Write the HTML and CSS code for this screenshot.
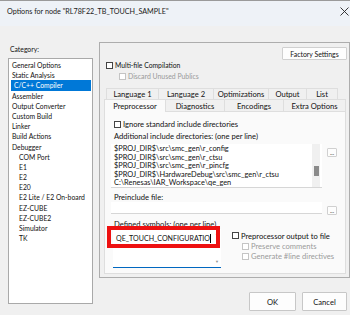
FILE: index.html
```html
<!DOCTYPE html>
<html>
<head>
<meta charset="utf-8">
<link rel="stylesheet" href="styles.css">
</head>
<body>
<div class="window">
  <div class="titlebar">
    <span class="title">Options for node "RL78F22_TB_TOUCH_SAMPLE"</span>
    <svg class="close" width="9" height="9" viewBox="0 0 9 9"><path d="M0.5 0.5 L8.5 8.5 M8.5 0.5 L0.5 8.5" stroke="#222" stroke-width="0.9" fill="none"/></svg>
  </div>
  <div class="main">
    <div class="leftcol">
      <div class="cat-label">Category:</div>
      <ul class="catlist">
        <li>General Options</li>
        <li>Static Analysis</li>
        <li class="sel">C/C++ Compiler</li>
        <li>Assembler</li>
        <li>Output Converter</li>
        <li>Custom Build</li>
        <li>Linker</li>
        <li>Build Actions</li>
        <li>Debugger</li>
        <li class="sub">COM Port</li>
        <li class="sub">E1</li>
        <li class="sub">E2</li>
        <li class="sub">E20</li>
        <li class="sub">E2 Lite / E2 On-board</li>
        <li class="sub">EZ-CUBE</li>
        <li class="sub">EZ-CUBE2</li>
        <li class="sub">Simulator</li>
        <li class="sub">TK</li>
      </ul>
    </div>
    <div class="rightcol">
      <div class="group">
        <div class="factory-row"><span class="btn factory">Factory Settings</span></div>
        <div class="chk multi"><span class="box"></span>Multi-file Compilation</div>
        <div class="chk discard disabled"><span class="box"></span>Discard Unused Publics</div>
        <div class="tabs">
          <div class="tabrow back">
            <span class="tab w53">Language 1</span>
            <span class="tab w56">Language 2</span>
            <span class="tab w56">Optimizations</span>
            <span class="tab w39">Output</span>
            <span class="tab w31">List</span>
          </div>
          <div class="tabrow front">
            <span class="tab active w62">Preprocessor</span>
            <span class="tab w59">Diagnostics</span>
            <span class="tab w59">Encodings</span>
            <span class="tab w62b">Extra Options</span>
          </div>
          <div class="panel">
            <div class="chk ignore"><span class="box"></span>Ignore standard include directories</div>
            <div class="lbl l-add">Additional include directories: (one per line)</div>
            <div class="field-row">
              <div class="textarea inc">
                <div class="lines">
                  <div>$PROJ_DIR$\src\smc_gen\r_config</div>
                  <div>$PROJ_DIR$\src\smc_gen\r_ctsu</div>
                  <div>$PROJ_DIR$\src\smc_gen\r_pincfg</div>
                  <div>$PROJ_DIR$\HardwareDebug\src\smc_gen\r_ctsu</div>
                  <div>C:\Renesas\IAR_Workspace\qe_gen</div>
                </div>
                <div class="vscroll"><div class="thumb"></div></div>
              </div>
              <span class="btn dots dots1">...</span>
            </div>
            <div class="lbl l-pre">Preinclude file:</div>
            <div class="field-row">
              <div class="input pre"></div>
              <span class="btn dots dots2">...</span>
            </div>
            <div class="lbl l-def">Defined symbols: (one per line)</div>
            <div class="def-row">
              <div class="defbox">
                <div class="deftext">QE_TOUCH_CONFIGURATIO<span class="caret"></span></div>
                <div class="arrows"><span>&#9650;</span><span>&#9660;</span></div>
                <div class="highlight"></div>
              </div>
              <div class="pp-opts">
                <div class="chk pp"><span class="box"></span>Preprocessor output to file</div>
                <div class="chk ppsub disabled"><span class="box"></span>Preserve comments</div>
                <div class="chk ppsub disabled"><span class="box"></span>Generate #line directives</div>
              </div>
            </div>
          </div>
        </div>
      </div>
      <div class="buttons">
        <span class="btn ok">OK</span>
        <span class="btn cancel">Cancel</span>
      </div>
    </div>
  </div>
</div>
</body>
</html>
```

FILE: styles.css
```css
* { box-sizing: border-box; }
html, body {
  margin: 0;
  padding: 0;
  width: 350px;
  height: 315px;
  overflow: hidden;
  background: #f0f0f0;
  font-family: Lato, "Noto Sans", sans-serif;
  font-size: 7.6px;
  color: #111;
}
.window {
  width: 350px;
  height: 315px;
  border-top: 1px solid #9a9a9a;
  background: #f0f0f0;
}
.titlebar {
  height: 25px;
  background: #eef2f7;
  display: flex;
  align-items: center;
  justify-content: space-between;
  padding: 0 1px 4px 7px;
}
.title {
  font-size: 7.2px;
  color: #1a1a1a;
}
.main {
  display: flex;
}
.leftcol {
  margin-left: 8px;
  width: 86px;
  font-size: 6.8px;
}
.cat-label {
  margin-top: 18px;
  height: 10px;
  line-height: 10px;
  padding-left: 2px;
}
.catlist {
  list-style: none;
  margin: 4px 0 0 0;
  padding: 1px 1px 0 1px;
  height: 246px;
  background: #fff;
  border: 1px solid #a9a9a9;
}
.catlist li {
  height: 10.2px;
  line-height: 10.2px;
  padding-left: 2px;
  white-space: nowrap;
}
.catlist li.sel {
  background: #0078d7;
  color: #fff;
  margin-left: 1px;
  padding-left: 3px;
}
.catlist li.sub { padding-left: 9px; }
.rightcol {
  margin-left: 6px;
  margin-top: 16px;
}
.group {
  width: 251px;
  height: 236px;
  border: 1px solid #adadad;
  padding-right: 2px;
}
.factory-row {
  display: flex;
  justify-content: flex-end;
  margin-top: 4px;
}
.btn {
  display: flex;
  align-items: center;
  justify-content: center;
  background: #fdfdfd;
  border: 1px solid #d0d0d0;
  border-radius: 1px;
}
.factory {
  width: 65px;
  height: 13px;
  font-size: 6.9px;
}
.chk {
  display: flex;
  align-items: center;
  height: 10px;
  white-space: nowrap;
}
.chk .box {
  width: 7px;
  height: 7px;
  border: 1px solid #444;
  background: #fff;
  margin-right: 2px;
  flex: none;
}
.chk.disabled { color: #9a9a9a; }
.chk.disabled .box { border-color: #c4c4c4; }
.multi { margin-left: 6px; font-size: 6.8px; }
.discard { margin-left: 19px; margin-top: 1px; font-size: 6.9px; }
.tabs {
  margin-top: 7px;
  margin-left: 4px;
  width: 242px;
}
.tabrow {
  display: flex;
}
.tabrow.back {
  height: 11px;
  margin-left: 2px;
}
.tabrow.front {
  height: 12px;
}
.tab {
  display: flex;
  align-items: center;
  justify-content: center;
  border: 1px solid #dedede;
  border-bottom: none;
  margin-right: -1px;
  background: #f0f0f0;
  white-space: nowrap;
}
.tab.active {
  background: #fafafa;
  position: relative;
  z-index: 1;
  height: 13px;
}
.w53 { width: 53px; }
.w56 { width: 56px; }
.w39 { width: 39px; }
.w31 { width: 32px; }
.w62 { width: 62px; }
.w59 { width: 60px; }
.w62b { width: 63px; }
.panel {
  height: 163px;
  background: #fafafa;
  border: 1px solid #dedede;
  padding-left: 6px;
}
.ignore { margin-left: 3px; margin-top: 7px; }
.lbl {
  height: 10px;
  line-height: 10px;
  padding-left: 3px;
  white-space: nowrap;
}
.l-add { margin-top: 2px; }
.field-row {
  display: flex;
  align-items: flex-start;
}
.textarea.inc {
  margin-top: 3px;
  width: 211px;
  height: 44px;
  background: #fff;
  border-bottom: 1px solid #d6d6d6;
  display: flex;
  overflow: hidden;
}
.lines {
  flex: 1;
  padding-left: 3px;
  padding-top: 1px;
  font-size: 7.4px;
  line-height: 8.6px;
  white-space: nowrap;
  overflow: hidden;
}
.vscroll {
  width: 8px;
  margin-right: 2px;
  background: #f0f0f0;
  padding-top: 22px;
  display: flex;
  justify-content: center;
}
.thumb {
  width: 5px;
  height: 10px;
  background: #8a8a8a;
}
.dots {
  width: 10px;
  height: 9px;
  margin-left: 5px;
  font-size: 6px;
  line-height: 6px;
  align-items: flex-start;
  padding-top: 1px;
}
.dots1 { margin-top: 7px; }
.dots2 { margin-top: 4px; }
.l-pre { margin-top: 4px; }
.input.pre {
  width: 211px;
  height: 12px;
  background: #fff;
  border-bottom: 1px solid #d6d6d6;
}
.l-def { margin-top: 4px; }
.def-row {
  display: flex;
}
.defbox {
  margin-left: 2px;
  width: 108px;
  height: 39px;
  background: #fff;
  border-bottom: 1px solid #0067c0;
  position: relative;
}
.deftext {
  padding-left: 3px;
  padding-top: 5px;
  font-size: 7.1px;
  line-height: 9px;
  display: flex;
  align-items: center;
  white-space: nowrap;
}
.caret {
  width: 1px;
  height: 9px;
  background: #000;
}
.arrows {
  position: absolute;
  right: 2px;
  top: 2px;
  bottom: 3px;
  display: flex;
  flex-direction: column;
  justify-content: space-between;
  font-size: 4px;
  color: #909090;
}
.highlight {
  position: absolute;
  left: -6px;
  top: -3px;
  width: 113px;
  height: 22px;
  border: 4px solid #ee1111;
}
.pp-opts {
  margin-left: 11px;
  margin-top: 1px;
}
.pp { height: 11px; }
.ppsub { margin-left: 10px; }
.buttons {
  display: flex;
  justify-content: flex-end;
  margin-top: 14px;
  margin-right: 3px;
}
.ok {
  width: 47px;
  height: 19px;
  border-color: #c7c7c7;
}
.cancel {
  width: 45px;
  height: 19px;
  margin-left: 6px;
  border-color: #c7c7c7;
}
```
